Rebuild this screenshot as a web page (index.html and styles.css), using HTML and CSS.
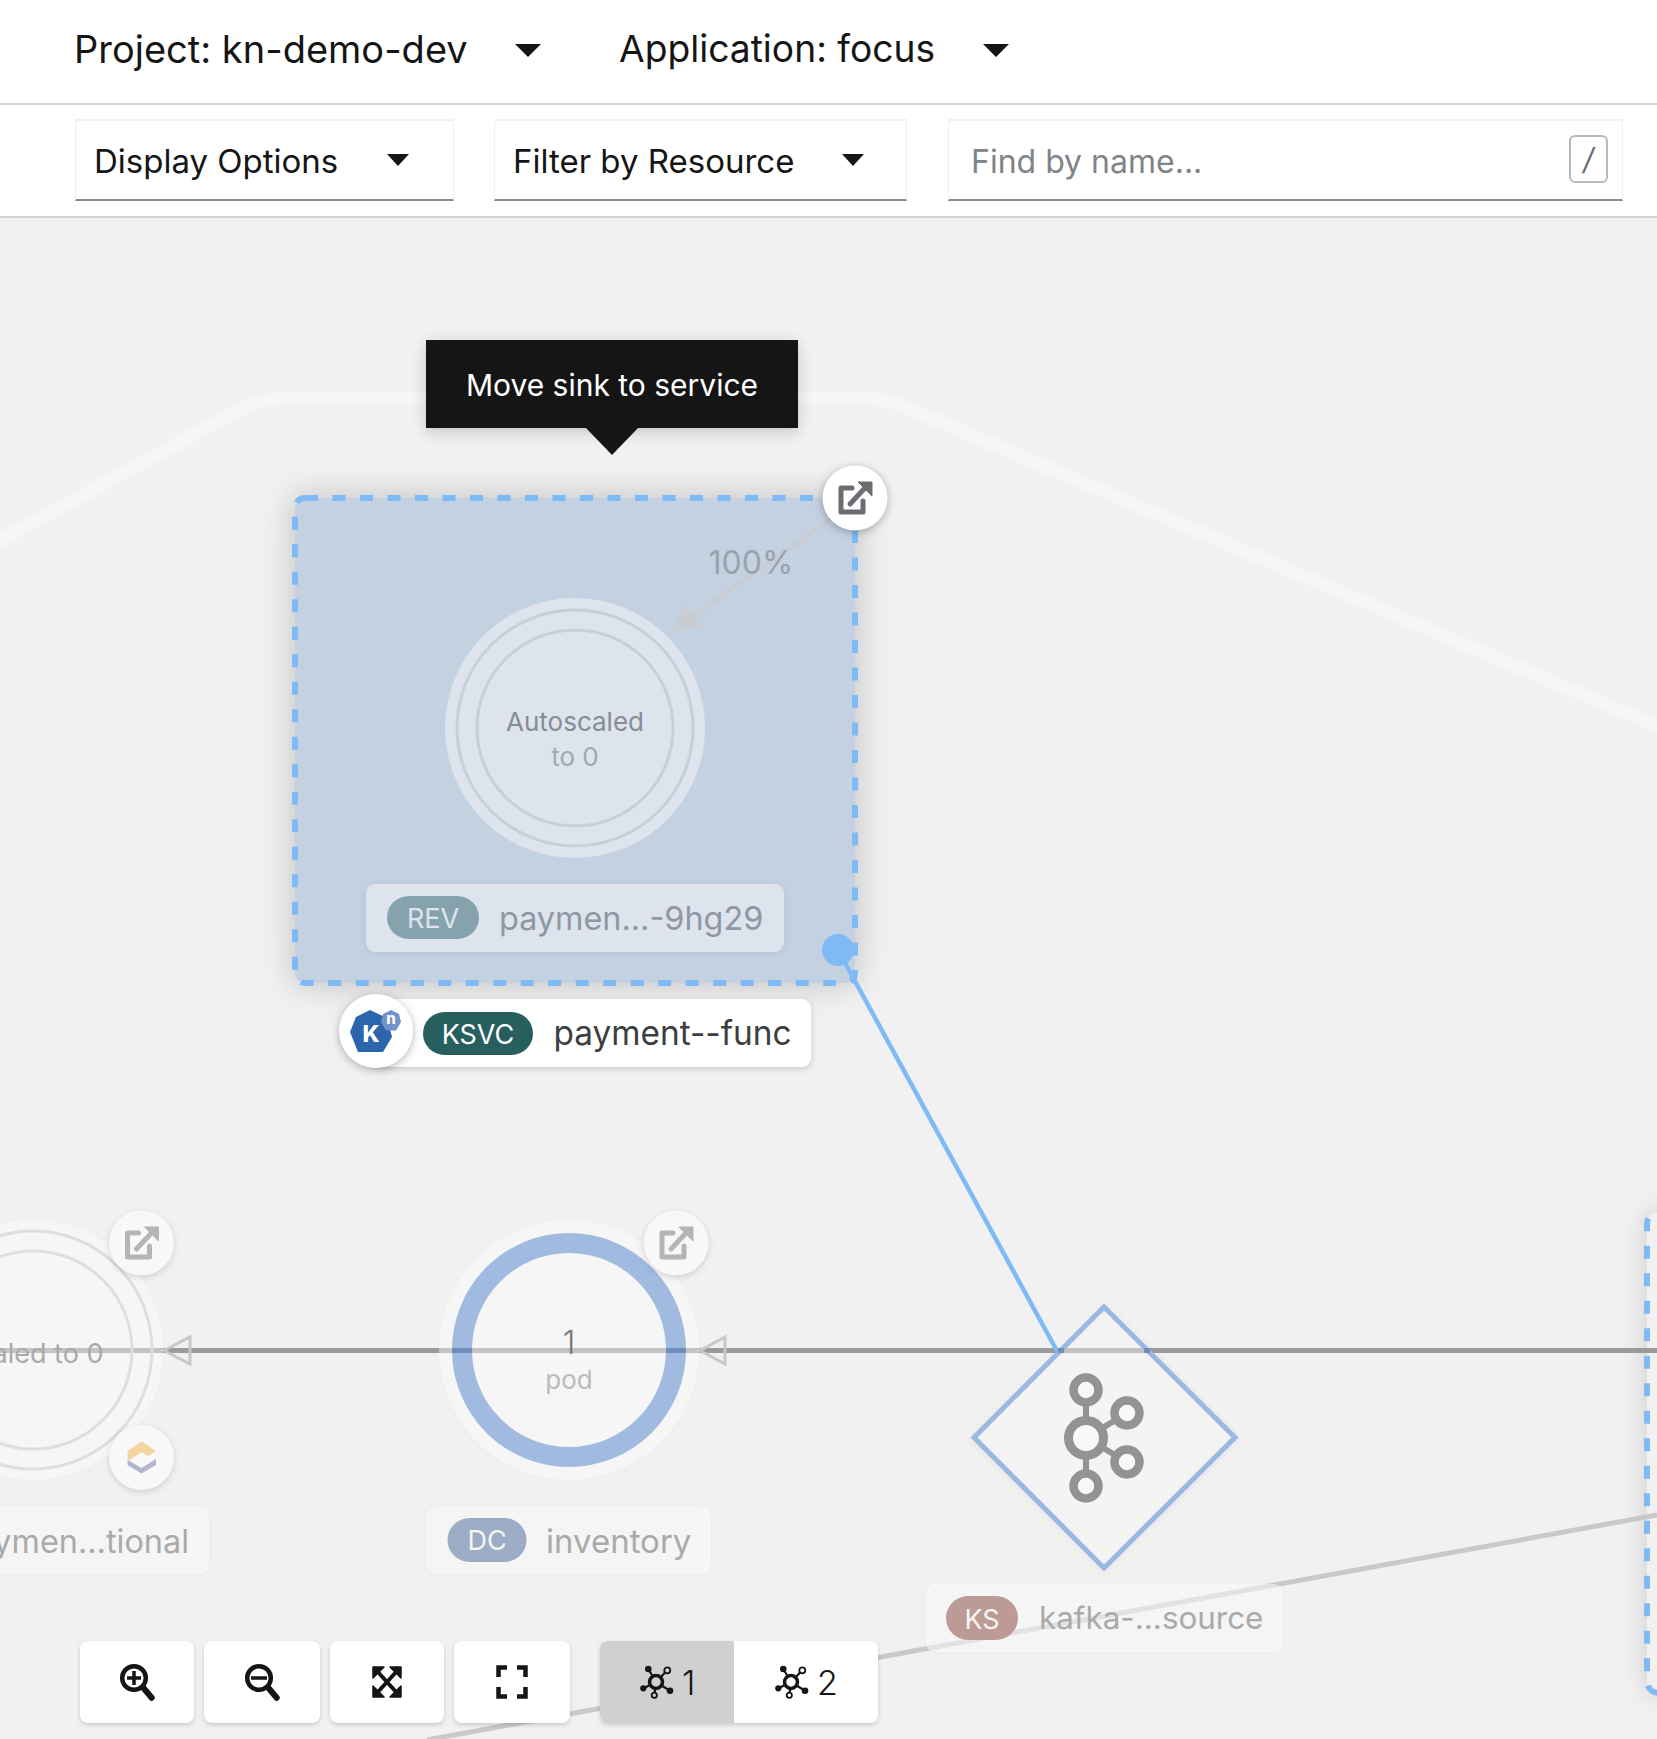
FILE: index.html
```html
<!DOCTYPE html>
<html lang="en">
<head>
<meta charset="utf-8">
<title>Topology</title>
<link rel="stylesheet" href="styles.css">
</head>
<body>
<div class="page">
  <header class="topbar">
    <div class="crumb crumb-project"><span>Project: kn-demo-dev</span><i class="caret"></i></div>
    <div class="crumb crumb-app"><span>Application: focus</span><i class="caret"></i></div>
  </header>
  <div class="filterbar">
    <div class="select select-display"><span>Display Options</span><i class="caret caret-small"></i></div>
    <div class="select select-filter"><span>Filter by Resource</span><i class="caret caret-small"></i></div>
    <div class="search"><span class="placeholder">Find by name...</span><span class="slash">/</span></div>
  </div>
  <main class="canvas">
    <svg class="graph" width="1657" height="1521" viewBox="0 218 1657 1521" xmlns="http://www.w3.org/2000/svg">
      <defs>
        <g id="ext">
          <path d="M-3 -10H-14V14H8V3" fill="none" stroke="currentColor" stroke-width="5" stroke-linejoin="round" stroke-linecap="round"/>
          <path d="M-5 6L9 -9" fill="none" stroke="currentColor" stroke-width="5" stroke-linecap="round"/>
          <path d="M3 -16H17V-2Z" fill="currentColor" stroke="currentColor" stroke-width="1" stroke-linejoin="round"/>
        </g>
        <g id="topo">
          <path d="M12.600 11.300L8.300 4M20.500 12.400L25.300 7.300M21.600 20.500L30 25.700M15.200 23.300L14.600 27.800M10.100 19.900L3.300 23.300" class="ic-spoke"/>
          <circle cx="16" cy="17" r="6.500" class="ic-ring"/>
          <circle cx="8.300" cy="4" r="3.300" class="ic-f"/>
          <circle cx="27.300" cy="5.300" r="3" class="ic-open"/>
          <circle cx="30" cy="25.700" r="3.300" class="ic-f"/>
          <circle cx="14.300" cy="30.300" r="2.600" class="ic-open"/>
          <circle cx="3.300" cy="23.300" r="3.100" class="ic-f"/>
        </g>
      </defs>

      <path class="group-band" d="M-10 546L235 412Q262 398 290 398L860 398Q885 398 905 407L1680 736"/>

      <rect class="rev-right" x="1647" y="1212" width="120" height="481" rx="12"/>
      <line class="edge-gray" x1="427" y1="1740" x2="1657" y2="1515"/>
      <line class="edge-dark" x1="0" y1="1350.5" x2="1657" y2="1350.5"/>

      <rect class="rev-box" x="295" y="498" width="560" height="485" rx="10"/>
      <circle class="rev-outer" cx="575" cy="728" r="130"/>
      <circle class="rev-ring" cx="575" cy="728" r="118"/>
      <circle class="rev-ring" cx="575" cy="728" r="98"/>
      <path class="arrow-soft" d="M830 520L690 618"/>
      <path class="arrow-head" d="M671 632L686 604L702 627Z"/>
      <text class="t-100" x="751" y="574">100%</text>
      <text class="t-auto" x="575" y="731">Autoscaled</text>
      <text class="t-auto-2" x="575" y="766">to 0</text>
      <rect class="rev-label" x="366" y="884" width="418" height="68" rx="9"/>
      <rect class="pill-rev" x="387" y="896" width="92" height="43" rx="21.5"/>
      <text class="t-pill t-pill-rev" x="433" y="928">REV</text>
      <text class="t-rev" x="499" y="930">paymen...-9hg29</text>
      <line class="edge-blue" x1="838" y1="950" x2="1057" y2="1351"/>
      <circle class="dot-blue" cx="838" cy="950" r="16"/>

      <g class="ext-bubble">
        <circle class="bubble" cx="855" cy="498" r="32.5"/>
        <use href="#ext" x="855" y="498" class="ext-dark"/>
      </g>

      <rect class="ksvc-label" x="370" y="999" width="441" height="68" rx="9"/>
      <circle class="bubble" cx="376" cy="1031" r="37"/>
      <path class="kn-big" d="M370 1010L387 1018L392 1037L383 1052H358L350 1032L356 1017Z"/>
      <text class="t-k" x="371" y="1042">K</text>
      <path class="kn-small" d="M391 1010L399 1014L401 1022L396 1030.500H386L381 1022L383 1014Z"/>
      <text class="t-n" x="391" y="1024">n</text>
      <rect class="pill-ksvc" x="423" y="1012" width="110" height="43" rx="21.500"/>
      <text class="t-pill" x="478" y="1044">KSVC</text>
      <text class="t-ksvc" x="553.500" y="1045">payment--func</text>

      <polygon class="triangle" points="164,1350.5 190,1337 190,1364"/>
      <polygon class="triangle" points="700,1350.5 725,1337 725,1364"/>

      <circle class="node-fade" cx="33" cy="1350" r="130"/>
      <circle class="ring-gray" cx="33" cy="1350" r="119"/>
      <circle class="ring-gray" cx="33" cy="1350" r="99"/>
      <text class="t-side" x="103.500" y="1363">Autoscaled to 0</text>

      <circle class="node-fade" cx="569" cy="1350" r="130"/>
      <circle class="ring-blue" cx="569" cy="1350" r="107"/>
      <rect class="ring-cross" x="452" y="1348" width="20" height="5"/>
      <rect class="ring-cross" x="666" y="1348" width="20" height="5"/>
      <text class="t-one" x="569" y="1354">1</text>
      <text class="t-pod" x="569" y="1389">pod</text>

      <circle class="bubble-fade" cx="141.500" cy="1243" r="32.500"/>
      <use href="#ext" x="141.500" y="1243" class="ext-light"/>
      <circle class="bubble-fade" cx="676" cy="1243" r="32.500"/>
      <use href="#ext" x="676" y="1243" class="ext-light"/>
      <circle class="bubble-fade" cx="141.500" cy="1457.500" r="32.500"/>
      <path class="qk-top" d="M141.500 1441.500L156 1451L148 1456L141.500 1452L135 1456.500L127.500 1461V1451Z"/>
      <path class="qk-bot" d="M127.500 1460L141.500 1468L156 1459V1465L141.500 1473.500L127.500 1465Z"/>

      <rect class="label-fade" x="-60" y="1507" width="269" height="67" rx="9"/>
      <text class="t-faded t-end" x="189" y="1553">paymen...tional</text>
      <rect class="label-fade" x="427" y="1507" width="284" height="67" rx="9"/>
      <rect class="pill-dc" x="447.500" y="1518" width="79" height="44" rx="22"/>
      <text class="t-pill t-pill-fade" x="487" y="1550">DC</text>
      <text class="t-faded" x="546" y="1553">inventory</text>

      <polygon class="diamond" points="1104,1307 1235,1437.500 1104,1568 974,1437.500"/>
      <rect class="ring-cross" x="1058" y="1348" width="6" height="5"/>
      <rect class="ring-cross" x="1144" y="1348" width="6" height="5"/>
      <g class="kafka">
        <line x1="1086" y1="1390" x2="1086" y2="1486"/>
        <line x1="1086" y1="1438" x2="1127" y2="1413"/>
        <line x1="1086" y1="1438" x2="1127" y2="1462"/>
        <circle class="kafka-big" cx="1086" cy="1438" r="17.500"/>
        <circle class="kafka-sm" cx="1086" cy="1390" r="12.500"/>
        <circle class="kafka-sm" cx="1086" cy="1486" r="12.500"/>
        <circle class="kafka-sm" cx="1127" cy="1413" r="12.500"/>
        <circle class="kafka-sm" cx="1127" cy="1462" r="12.500"/>
      </g>

      <rect class="label-fade" x="926" y="1584" width="357" height="68" rx="9"/>
      <rect class="pill-ks" x="946" y="1596" width="72" height="44" rx="22"/>
      <text class="t-pill t-pill-fade" x="982" y="1629">KS</text>
      <text class="t-faded t-kafka" x="1039" y="1629">kafka-...source</text>
    </svg>

    <div class="tooltip">Move sink to service</div>

    <div class="controls">
      <button class="ctl ctl-a" type="button">
        <svg width="36" height="38" viewBox="0 0 36 38"><circle cx="15" cy="15" r="11.800" class="ic-s"/><path d="M24.300 24.700L32.700 34.700" class="ic-s ic-thick"/><path d="M15 8V22M8 15H22" class="ic-s ic-thin"/></svg>
      </button>
      <button class="ctl ctl-b" type="button">
        <svg width="36" height="38" viewBox="0 0 36 38"><circle cx="15" cy="15" r="11.800" class="ic-s"/><path d="M24.300 24.700L32.700 34.700" class="ic-s ic-thick"/><path d="M7 15H23" class="ic-s ic-thin"/></svg>
      </button>
      <button class="ctl ctl-c" type="button">
        <svg width="32" height="34" viewBox="0 0 32 34"><path d="M6 6L26 28M26 6L6 28" class="ic-s ic-x"/><path d="M2 2H13L2 13ZM30 2H19L30 13ZM2 32H13L2 21ZM30 32H19L30 21Z" class="ic-head"/></svg>
      </button>
      <button class="ctl ctl-d" type="button">
        <svg width="32" height="34" viewBox="0 0 32 34"><path d="M11 2.500H2.500V12M21 2.500H29.500V12M11 31.500H2.500V22M21 31.500H29.500V22" class="ic-s ic-bracket"/></svg>
      </button>
      <div class="ctl-group">
        <button class="ctl-seg ctl-seg-on" type="button">
          <svg width="34" height="34" viewBox="0 0 34 34"><use href="#topo"/></svg>
          <span>1</span>
        </button>
        <button class="ctl-seg ctl-seg-off" type="button">
          <svg width="34" height="34" viewBox="0 0 34 34"><use href="#topo"/></svg>
          <span>2</span>
        </button>
      </div>
    </div>
  </main>
</div>
</body>
</html>
```
FILE: styles.css
```css
* { box-sizing: border-box; }
html, body { margin: 0; padding: 0; height: 100%; }
body { font-family: "Inter", "Liberation Sans", sans-serif; color: #151515; background: #fff; overflow: hidden; }
.page { display: flex; flex-direction: column; height: 1739px; width: 1657px; }

.topbar { height: 105px; border-bottom: 2px solid #d2d2d2; display: flex; align-items: center; padding: 0 0 6px 74px; gap: 78px; font-size: 38px; background: #fff; }
.crumb { display: flex; align-items: center; justify-content: space-between; }
.crumb-project { width: 467px; }
.crumb-app { width: 390px; font-size: 37.200px; }
.caret { display: block; width: 0; height: 0; border-left: 13px solid transparent; border-right: 13px solid transparent; border-top: 13px solid #151515; }
.crumb .caret { margin-top: 4px; }
.caret-small { border-left-width: 11.5px; border-right-width: 11.5px; border-top-width: 12px; }

.filterbar { height: 113px; border-bottom: 2px solid #d2d2d2; display: flex; align-items: flex-start; padding: 14px 34px 0 75px; background: #fff; font-size: 33px; }
.select, .search { height: 82px; display: flex; align-items: center; border: 1px solid #f0f0f0; border-top-width: 2px; border-bottom: 2px solid #8a8d90; background: #fff; }
.select { justify-content: space-between; padding: 2px 44px 0 18px; }
.select .caret { margin-top: -3px; }
.select-display { width: 379px; }
.select-filter { width: 413px; margin-left: 40px; padding-right: 42px; }
.search { width: 675px; margin-left: 41px; padding: 2px 14px 0 22px; justify-content: space-between; }
.placeholder { color: #808488; font-size: 32px; }
.slash { width: 39px; height: 48px; margin-top: -4px; border: 2px solid #b8bbbe; border-radius: 6px; display: flex; align-items: center; justify-content: center; color: #6a6e73; font-size: 30px; font-style: italic; }

.canvas { position: relative; flex: 1; background: #f1f1f1; overflow: hidden; }
.graph { position: absolute; left: 0; top: 0; display: block; font-family: "Inter", "Liberation Sans", sans-serif; }

.group-band { fill: none; stroke: #f6f6f6; stroke-width: 13; }
.edge-gray { stroke: #c9c9c9; stroke-width: 5; }
.edge-dark { stroke: #9a9a9a; stroke-width: 5; }
.edge-blue { stroke: #7fbaf5; stroke-width: 4.500; }
.dot-blue { fill: #7fbaf5; }
.rev-box { fill: #c4d1e1; stroke: #7fbaf5; stroke-width: 6; stroke-dasharray: 13 14.500; filter: drop-shadow(0 0 16px rgba(0,0,0,.2)); }
.rev-right { fill: #f1f1f1; stroke: #7fbaf5; stroke-width: 6; stroke-dasharray: 13 14.500; filter: drop-shadow(0 0 12px rgba(0,0,0,.14)); }
.arrow-soft { stroke: #c8cdd3; stroke-width: 5; fill: none; }
.arrow-head { fill: #c8cdd3; }
.t-100 { font-size: 32px; fill: #99a2ad; text-anchor: middle; }
.rev-outer, .rev-label { fill: #dde4ed; }
.rev-label { filter: drop-shadow(0 1px 3px rgba(0,0,0,.08)); }
.rev-ring { fill: none; stroke: #c8cfd9; stroke-width: 3; }
.t-auto { font-size: 26px; fill: #868c97; text-anchor: middle; }
.t-auto-2 { font-size: 26px; fill: #a1a9b4; text-anchor: middle; }
.pill-rev { fill: #86a3ad; }
.pill-ksvc { fill: #275e5e; }
.pill-dc { fill: #9cacc4; }
.pill-ks { fill: #bc9b96; }
.t-pill { font-size: 27px; fill: #fff; text-anchor: middle; }
.t-pill-rev { fill: #dde4ed; }
.t-pill-fade { fill: #f4f4f4; }
.t-rev { font-size: 32.400px; fill: #8f97a3; }
.t-ksvc { font-size: 33.400px; fill: #3c3f42; }
.t-faded { font-size: 33px; fill: #aaa; }
.t-kafka { font-size: 31.400px; }
.t-end { text-anchor: end; font-size: 32.400px; }
.t-side { font-size: 27px; fill: #aaa; text-anchor: end; }
.t-one { font-size: 32px; font-weight: 300; fill: #777; text-anchor: middle; }
.t-pod { font-size: 26px; fill: #bbb; text-anchor: middle; }

.bubble { fill: #fff; filter: drop-shadow(0 2px 4px rgba(0,0,0,.28)); }
.ext-dark { color: #6a6e73; }
.ext-light { color: #b5b5b5; }
.bubble-fade { fill: #f8f8f8; filter: drop-shadow(0 2px 3px rgba(0,0,0,.14)); }
.ksvc-label { fill: #fff; filter: drop-shadow(0 2px 3px rgba(0,0,0,.16)); }
.label-fade { fill: #ffffff; fill-opacity: .5; filter: drop-shadow(0 1px 2px rgba(0,0,0,.05)); }
.kn-big { fill: #2b66ac; }
.kn-small { fill: #6f93ca; }
.t-k { font-size: 23px; font-weight: 800; fill: #fff; text-anchor: middle; }
.t-n { font-size: 15px; font-weight: 800; fill: #fff; text-anchor: middle; }
.triangle { fill: none; stroke: #c8c8c8; stroke-width: 3; }
.node-fade { fill: #fff; fill-opacity: .42; filter: drop-shadow(0 1px 2px rgba(0,0,0,.03)); }
.ring-gray { fill: none; stroke: #dedede; stroke-width: 3; }
.ring-blue { fill: none; stroke: #a0bbdf; stroke-width: 20; }
.ring-cross { fill: #6e8db9; }
.diamond { fill: #fff; fill-opacity: .42; stroke: #9ab8e0; stroke-width: 5; filter: drop-shadow(0 1px 3px rgba(0,0,0,.06)); }
.kafka line { stroke: #939393; stroke-width: 6; }
.kafka circle { fill: #f8f8f8; stroke: #939393; }
.kafka-big { stroke-width: 9; }
.kafka-sm { stroke-width: 8.500; }
.qk-top { fill: #f2d5a0; }
.qk-bot { fill: #b3b5cf; }

.tooltip { position: absolute; left: 426px; top: 122px; width: 372px; height: 88px; padding-top: 2px; background: #151515; color: #fff; font-size: 30px; display: flex; align-items: center; justify-content: center; box-shadow: 0 4px 14px rgba(0,0,0,.18); }
.tooltip::after { content: ""; position: absolute; left: 160px; top: 88px; border-left: 26px solid transparent; border-right: 26px solid transparent; border-top: 27px solid #151515; }

.controls { position: absolute; left: 80px; bottom: 16px; display: flex; height: 82px; }
.ctl, .ctl-group { background: #fff; border: 0; border-radius: 8px; box-shadow: 0 2px 4px rgba(0,0,0,.16); height: 82px; padding: 0; display: flex; align-items: center; justify-content: center; }
.ctl-a { width: 114px; }
.ctl-b { width: 116px; margin-left: 10px; }
.ctl-c { width: 114px; margin-left: 10px; }
.ctl-d { width: 116px; margin-left: 10px; }
.ctl-group { width: 278px; margin-left: 30px; overflow: hidden; justify-content: flex-start; }
.ctl-seg { height: 82px; border: 0; background: #fff; display: flex; align-items: center; justify-content: flex-start; gap: 8px; font-family: inherit; font-size: 34px; font-weight: 300; color: #151515; padding: 0 0 0 40px; }
.ctl-seg-on { background: #d0d0d0; width: 134px; }
.ctl-seg-off { width: 144px; padding-left: 41px; }
.ic-s { fill: none; stroke: #151515; stroke-width: 4.500; }
.ic-thick { stroke-width: 6; stroke-linecap: round; }
.ic-thin { stroke-width: 3.500; }
.ic-x { stroke-width: 4; }
.ic-bracket { stroke-width: 4.500; }
.ic-head { fill: #151515; stroke: #151515; stroke-width: 1.500; stroke-linejoin: round; }
.ic-f { fill: #151515; }
.ic-ring { fill: none; stroke: #151515; stroke-width: 3.500; }
.ic-spoke { fill: none; stroke: #151515; stroke-width: 2.200; }
.ic-open { fill: none; stroke: #151515; stroke-width: 1.800; }
```
